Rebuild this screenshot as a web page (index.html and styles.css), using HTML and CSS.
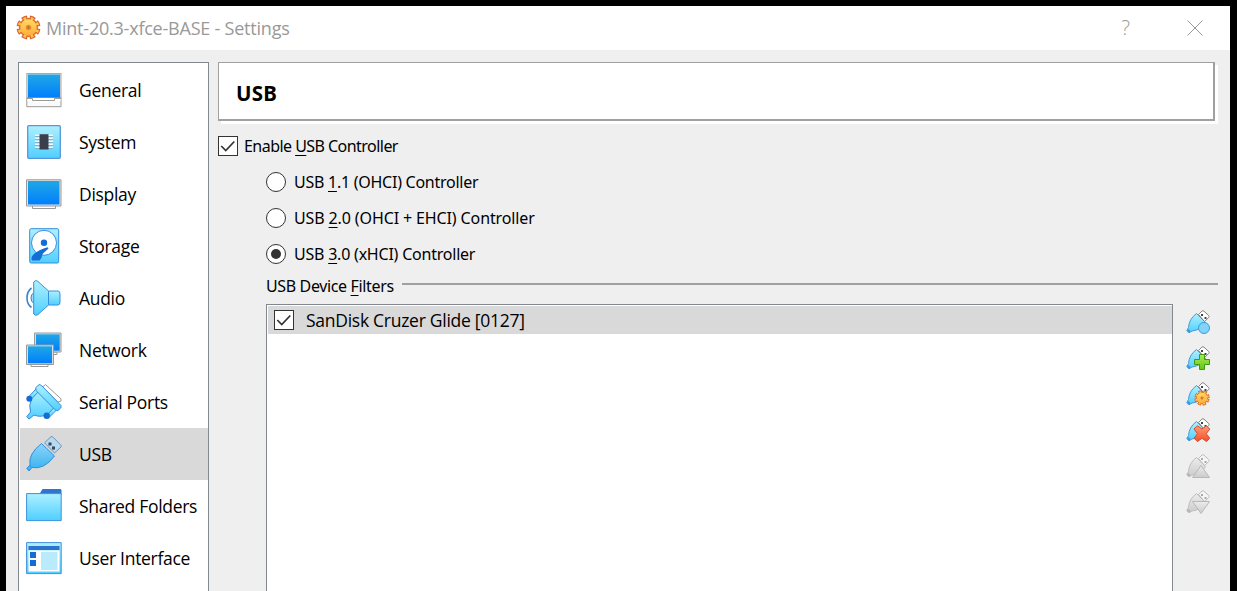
FILE: index.html
```html
<!DOCTYPE html>
<html lang="en">
<head>
<meta charset="utf-8">
<title>Mint-20.3-xfce-BASE - Settings</title>
<link rel="stylesheet" href="styles.css">
</head>
<body>
<svg class="defs" width="0" height="0" aria-hidden="true">
  <defs>
    <linearGradient id="screen" x2="0" y2="1"><stop stop-color="#20a7e5"/><stop offset="1" stop-color="#007ffc"/></linearGradient>
    <linearGradient id="sky" x2="0" y2="1"><stop stop-color="#aef0ff"/><stop offset="1" stop-color="#4fcfff"/></linearGradient>
    <linearGradient id="plug" x2="0" y2="1"><stop stop-color="#8fd4fb"/><stop offset="1" stop-color="#33b1ee"/></linearGradient>
    <linearGradient id="gray" x2="0" y2="1"><stop stop-color="#ececec"/><stop offset="1" stop-color="#cbcbcb"/></linearGradient>
    <linearGradient id="green" x2="0" y2="1"><stop stop-color="#a6ee4e"/><stop offset="1" stop-color="#63c512"/></linearGradient>
    <linearGradient id="red" x2="0" y2="1"><stop stop-color="#ff9b78"/><stop offset="1" stop-color="#f0502a"/></linearGradient>
    <linearGradient id="gold" x2="0" y2="1"><stop stop-color="#ffdc66"/><stop offset="1" stop-color="#ffab3a"/></linearGradient>
    <symbol id="mini-usb" viewBox="0 0 24 24">
      <path d="M12.500 4.500 16 1Q17 .3 18 1.200L22.700 5.500q.8 1 0 2L18.500 11.500z" fill="#fff" stroke="#858585"/>
      <path d="M15 4h2v2h-2zM18.500 7h2v2h-2z" fill="#444"/>
      <path d="M10.500 3.500Q3 9 2.500 17.500L.8 20.500 3 22.800 6 21Q15 20 19.500 12.500z" fill="url(#sky)" stroke="#429ad5"/>
      <path d="M.8 20.500l1.700-1.500 2.200 2L3 23z" fill="#429ad5"/>
    </symbol>
    <symbol id="mini-usb-off" viewBox="0 0 24 24">
      <path d="M12.500 4.500 16 1Q17 .3 18 1.200L22.700 5.500q.8 1 0 2L18.500 11.500z" fill="#f5f5f5" stroke="#bcbcbc"/>
      <path d="M15 4h2v2h-2zM18.500 7h2v2h-2z" fill="#aaa"/>
      <path d="M10.500 3.500Q3 9 2.500 17.500L.8 20.500 3 22.800 6 21Q15 20 19.500 12.500z" fill="url(#gray)" stroke="#bdbdbd"/>
      <path d="M.8 20.500l1.700-1.500 2.200 2L3 23z" fill="#b5b5b5"/>
    </symbol>
    <symbol id="gear" viewBox="0 0 24 24">
      <circle cx="12" cy="12" r="9.600" pathLength="80" fill="none" stroke="#d9662a" stroke-width="3.800" stroke-dasharray="6.800 3.200" stroke-dashoffset="-1.600"/>
      <circle cx="12" cy="12" r="8.600" fill="url(#gold)" stroke="#dc7030" stroke-width="1.400"/>
      <circle cx="12" cy="12" r="9" pathLength="80" fill="none" stroke="#ffc04e" stroke-width="2.800" stroke-dasharray="3.600 6.400" stroke-dashoffset="-3.200"/>
      <circle cx="12" cy="12" r="1.900" fill="#b8702e" stroke="#ec8a2e" stroke-width="1.400"/>
    </symbol>
  </defs>
</svg>
<div class="window">
  <header class="titlebar">
    <svg class="app-icon" viewBox="0 0 24 24"><use href="#gear"/></svg>
    <span class="title">Mint-20.3-xfce-BASE - Settings</span>
    <span class="help">?</span>
    <svg class="close" viewBox="0 0 16 16"><path d="M.5.5l15 15M15.500.5l-15 15"/></svg>
  </header>
  <div class="content">
    <nav class="sidebar">
      <div class="item"><svg viewBox="0 0 36 36"><path d="M.8 25V34.700H35V25" fill="#fafafa" stroke="#999"/><rect x=".8" y="1.500" width="34.200" height="24" fill="#ddd" stroke="#aaa"/><rect x="2" y="2.500" width="32" height="23" fill="url(#screen)"/><path d="M1.500 26h33v3H28.500v1.500h-22V29h-5z" fill="#fff"/><path d="M1 26.500h5.500v2h22v-2H35" fill="none" stroke="#999"/></svg><span>General</span></div>
      <div class="item"><svg viewBox="0 0 36 36"><rect x="1.700" y="1.700" width="32.600" height="32.600" rx="1" fill="url(#sky)" stroke="#5796dc" stroke-width="1.300"/><path d="M9 11.500h18M9 14.500h18M9 17.500h18M9 20.500h18M9 23.500h18" stroke="#f4fcff" stroke-width="2"/><path d="M9 12.500h18M9 15.500h18M9 18.500h18M9 21.500h18M9 24.500h18" stroke="#7d9dad" stroke-width=".8"/><path d="M13.500 10.200h9v15.300h-9z" fill="#39404b"/></svg><span>System</span></div>
      <div class="item"><svg viewBox="0 0 36 36"><path d="M6.500 29.500h23v3h-23z" fill="#fff" stroke="#999"/><path d="M.5 3.800H35V30H.5z" fill="#e3e3e3" stroke="#999"/><path d="M2 5h31.500v23.500H2z" fill="url(#screen)"/></svg><span>Display</span></div>
      <div class="item"><svg viewBox="0 0 36 36"><rect x="3.700" y=".7" width="29" height="34.300" rx="1.500" fill="url(#sky)" stroke="#348ddd"/><circle cx="18" cy="14.800" r="12.500" fill="#fff" stroke="#348ddd"/><circle cx="18" cy="14.800" r="3.200" fill="#136dd5"/><path d="M21.500 19.300Q12 22 7 27q-2.500 3-1 5.500h7.500Q16 30 16.500 26L22.500 20.500z" fill="#136dd5"/></svg><span>Storage</span></div>
      <div class="item"><svg viewBox="0 0 36 36"><path d="M5.500 8Q1 11.500 1 18t4.500 9.500" fill="none" stroke="#3d83ca" stroke-width="1.600"/><path d="M7.500 13Q5 14 5 18t2.500 5" fill="#9bdcff" stroke="#3d83ca"/><path d="M22.500 11H32q2 0 2 3v8q0 3-2 3h-9.500z" fill="url(#sky)" stroke="#3790df"/><path d="M7.700 2Q9.500-.5 11.800 1.300L22.500 11v14L11.800 34.700Q9.500 36 7.700 34z" fill="url(#sky)" stroke="#3790df"/></svg><span>Audio</span></div>
      <div class="item"><svg viewBox="0 0 36 36"><path d="M25 20h6v2.500h-6z" fill="#fff" stroke="#999"/><path d="M8.500 1H35v19H8.500z" fill="#ddd" stroke="#999"/><path d="M10 2.300h23.700v16.400H10z" fill="url(#screen)"/><path d="M5 32h17v2.500H5z" fill="#fff" stroke="#999"/><path d="M.5 13H27.500v19.500H.5z" fill="#ddd" stroke="#999"/><path d="M2 14.300h24v17H2z" fill="url(#screen)"/></svg><span>Network</span></div>
      <div class="item"><svg viewBox="0 0 36 36"><path d="M16.500 3 19.500.6 35 14.800V17l-3 1z" fill="#fff" stroke="#999"/><path d="M1.500 14 10 5 14 9 6 17z" fill="url(#sky)" stroke="#348ddd"/><path d="M19 31 27.500 22 31 25.500l-8.500 8.500z" fill="url(#sky)" stroke="#348ddd"/><path d="M5.500 15 13 7 28.500 23 22 30Q15 34 8 31L3 35 .8 32.700 4.500 28Q2.500 21 5.500 15z" fill="url(#sky)" stroke="#348ddd"/><circle cx="3.300" cy="14.700" r="3" fill="#136dd5"/><circle cx="20.700" cy="31.700" r="3.200" fill="#136dd5"/><path d="M9.700 3.700 13 .7Q14.500.5 16 2L35 21.500v2L32 26.700q-2 0-3.500-1.500L10 6.500z" fill="url(#sky)" stroke="#348ddd"/></svg><span>Serial Ports</span></div>
      <div class="item selected"><svg viewBox="0 0 36 36"><path d="M18.500 6.800 25 .7Q26 .3 27 1.200L35 9.300q.7 1 0 1.700L28.500 17z" fill="#b8d9f2" stroke="#7293b5"/><path d="M22.500 6.500h3v3h-3zM26 10.500h3v3h-3z" fill="#394552"/><path d="M15.500 7.500 28.500 20Q18 34 6 31.500L3 35 .7 32.500 4 29Q2 18 15.500 7.500z" fill="url(#plug)" stroke="#348ddd"/><path d="M4 29.500 6 31.500" stroke="#348ddd"/></svg><span>USB</span></div>
      <div class="item"><svg viewBox="0 0 36 36"><path d="M13.500 6 16.500 1H34.500q1 0 1 1.500V7h-22z" fill="#2e76cf"/><path d="M.6 5.600h34.600v27H.6z" fill="url(#sky)" stroke="#3d91dd"/></svg><span>Shared Folders</span></div>
      <div class="item"><svg viewBox="0 0 36 36"><path d="M.6 2.600h34.600v31H.6z" fill="url(#sky)" stroke="#438fdb"/><path d="M2.500 6h31v4h-31z" fill="#2e72cf"/><path d="M2.500 10.500h31v21h-31z" fill="#fff"/><path d="M4 12h6v6H4zM4 20h6v6H4z" fill="#136dd5"/><path d="M15 12h16.500v18H15z" fill="#b9ebfc"/></svg><span>User Interface</span></div>
    </nav>
    <main class="page">
      <h1 class="heading"><span>USB</span></h1>
      <div class="option enable"><span class="check"><svg viewBox="0 0 20 20"><path d="M2.500 10 7.500 15l9.500-10"/></svg></span><span>Enable <u>U</u>SB Controller</span></div>
      <div class="option radio-row ohci"><span class="radio"></span><span>USB <u>1</u>.1 (OHCI) Controller</span></div>
      <div class="option radio-row ehci"><span class="radio"></span><span>USB <u>2</u>.0 (OHCI + EHCI) Controller</span></div>
      <div class="option radio-row xhci"><span class="radio on"></span><span>USB <u>3</u>.0 (xHCI) Controller</span></div>
      <div class="group-title"><span>USB Device <u>F</u>ilters</span><i class="rule"></i></div>
      <div class="filters">
        <div class="list">
          <div class="filter"><span class="check"><svg viewBox="0 0 20 20"><path d="M2.500 10 7.500 15l9.500-10"/></svg></span><span>SanDisk Cruzer Glide [0127]</span></div>
        </div>
        <div class="tools">
          <svg viewBox="0 0 24 24"><use href="#mini-usb"/><circle cx="18" cy="18" r="5.500" fill="#82d3fb" stroke="#429ad5"/></svg>
          <svg viewBox="0 0 24 24"><use href="#mini-usb"/><path d="M13.500 8.500h5v5h5v5h-5v5h-5v-5h-5v-5h5z" fill="url(#green)" stroke="#419718"/></svg>
          <svg viewBox="0 0 24 24"><use href="#mini-usb"/><use href="#gear" x="8" y="8" width="16" height="16"/></svg>
          <svg viewBox="0 0 24 24"><use href="#mini-usb"/><path d="M8 11 11.500 7.800 16 11l4.500-3.200L23.700 11l-3.400 4.700 3.400 4.500-3.200 3.300L16 20.300l-4.500 3.200L8 20.200l3.500-4.500z" fill="url(#red)" stroke="#d44a2c"/></svg>
          <svg viewBox="0 0 24 24"><use href="#mini-usb-off"/><path d="M6.500 23.500 15 11.500 23.500 23.500z" fill="url(#gray)" stroke="#b8b8b8"/></svg>
          <svg viewBox="0 0 24 24"><use href="#mini-usb-off"/><path d="M6.500 11.500h17L15 23.500z" fill="url(#gray)" stroke="#b8b8b8"/></svg>
        </div>
      </div>
    </main>
  </div>
</div>
</body>
</html>
```
FILE: styles.css
```css
* { box-sizing: border-box; }
html, body { height: 100%; }
body { margin: 0; padding: 6px 7px 0 6px; background: #000; overflow: hidden; font-family: "Noto Sans", sans-serif; color: #000; }
svg { display: block; flex: none; }
.defs { position: absolute; }
.window { height: 585px; display: flex; flex-direction: column; background: #efefef; overflow: hidden; }
.titlebar { height: 44px; flex: none; display: flex; align-items: center; background: #fff; padding: 0 27px 0 10px; color: #999; }
.app-icon { width: 25px; height: 25px; margin-top: -2px; }
.title { flex: 1; margin-left: 5px; font: 18px/24px "Open Sans", sans-serif; letter-spacing: -.22px; white-space: nowrap; }
.help { font: 20px/24px "Open Sans", sans-serif; font-weight: 300; margin-right: 57px; }
.close { width: 16px; height: 16px; fill: none; stroke: #999; }
.content { flex: 1; min-height: 0; display: flex; gap: 9px; padding: 12px 12px 0; }
.sidebar { width: 191px; height: 560px; flex: none; background: #fff; border: 1px solid #828790; padding: 1px 0 0 1px; }
.item { height: 52px; display: flex; align-items: center; gap: 17px; padding-left: 6px; font: 17.5px/24px "Open Sans", sans-serif; letter-spacing: -.3px; white-space: nowrap; }
.item svg { width: 36px; height: 36px; }
.item.selected { background: #d9d9d9; }
.page { flex: 1; min-width: 0; }
.heading { width: 997px; height: 59px; margin: 0 0 12px; padding: 4px 0 0 17px; display: flex; align-items: center; background: #fff; border: 1px solid #a0a0a0; border-width: 1px 2px 2px 1px; box-shadow: 3px 3px 0 #fff; font: bold 20.5px/26px "Noto Sans", sans-serif; letter-spacing: .2px; }
.option { height: 26px; display: flex; align-items: center; gap: 6px; font-size: 16px; line-height: 24px; letter-spacing: -.54px; white-space: nowrap; }
.radio-row { padding-left: 48px; gap: 8px; height: 36px; }
.ohci { letter-spacing: -.26px; }
.ehci { letter-spacing: -.12px; }
.xhci { letter-spacing: -.22px; }
.enable { margin-bottom: 5px; }
u { text-decoration-thickness: 1px; text-underline-offset: 3px; }
.check { width: 20px; height: 20px; flex: none; border: 1px solid #333; background: #fff; }
.check svg { width: 18px; height: 18px; fill: none; stroke: #333; stroke-width: 1.9; }
.radio { width: 20px; height: 20px; flex: none; display: grid; place-items: center; border: 1px solid #333; border-radius: 50%; background: #fff; }
.radio.on::after { content: ""; width: 10px; height: 10px; border-radius: 50%; background: #333; }
.group-title { height: 24px; margin: 2px 0 6px; padding-left: 48px; display: flex; align-items: center; gap: 8px; font-size: 16px; line-height: 24px; letter-spacing: -.36px; white-space: nowrap; }
.rule { flex: 1; height: 2px; background: #a0a0a0; margin-top: -4px; }
.filters { display: flex; gap: 13px; padding-left: 48px; }
.list { width: 907px; height: 300px; flex: none; background: #fff; border: 1px solid #828790; padding-top: 1px; }
.filter { height: 28px; display: flex; align-items: center; gap: 12px; padding-left: 6px; margin-left: 1px; background: #d9d9d9; font: 17.5px/24px "Open Sans", sans-serif; letter-spacing: -.27px; white-space: nowrap; }
.tools { display: flex; flex-direction: column; gap: 12px; padding-top: 6px; }
.tools svg { width: 24px; height: 24px; }
```
